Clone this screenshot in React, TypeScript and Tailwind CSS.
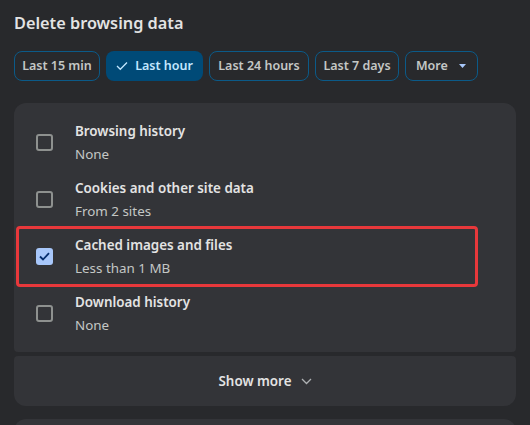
import React from 'react';

const chips = [
  { label: 'Last 15 min', w: 'w-[86px]' },
  { label: 'Last hour', w: 'w-[97px]', selected: true },
  { label: 'Last 24 hours', w: 'w-[100px]' },
  { label: 'Last 7 days', w: 'w-[84px]' },
];

const rows = [
  { title: 'Browsing history', sub: 'None' },
  { title: 'Cookies and other site data', sub: 'From 2 sites' },
  { title: 'Cached images and files', sub: 'Less than 1 MB', checked: true },
  { title: 'Download history', sub: 'None' },
];

const Checkbox = ({ checked }: { checked?: boolean }) =>
  checked ? (
    <div className="w-[17px] h-[17px] rounded-[3px] bg-[#a8c7fa] flex items-center justify-center">
      <svg width="11" height="9" viewBox="0 0 11 9" fill="none">
        <path d="M1 4.5 L4 7.5 L10 1.2" stroke="#062e6f" strokeWidth="1.8" />
      </svg>
    </div>
  ) : (
    <div className="w-[17px] h-[17px] rounded-[3px] border-2 border-[#8e918f]" />
  );

export default function App() {
  return (
    <div
      className="w-[530px] h-[425px] overflow-hidden bg-[#28292c] px-[14px] pt-[11px]"
      style={{ fontFamily: '"Noto Sans", "Segoe UI", sans-serif' }}
    >
      <h1 className="text-[16.3px] font-semibold text-[#e3e3e3] leading-[24px]">Delete browsing data</h1>

      <div className="flex gap-[6px] mt-[16px]">
        {chips.map((c) =>
          c.selected ? (
            <div
              key={c.label}
              className={`${c.w} h-[30px] rounded-[8px] bg-[#004a77] flex items-center justify-center gap-[7px] text-[12.5px] font-semibold text-[#c2e7ff]`}
            >
              <svg width="12" height="10" viewBox="0 0 12 10" fill="none">
                <path d="M1 5 L4.3 8.3 L11 1.5" stroke="#c2e7ff" strokeWidth="1.3" />
              </svg>
              {c.label}
            </div>
          ) : (
            <div
              key={c.label}
              className={`${c.w} h-[30px] rounded-[8px] border border-[#0b5a88] flex items-center justify-center text-[12.5px] font-semibold text-[#c4c7c5]`}
            >
              {c.label}
            </div>
          )
        )}
        <div className="w-[73px] h-[30px] rounded-[8px] border border-[#0b5a88] flex items-center gap-[11px] pl-[10px] text-[12.5px] font-semibold text-[#c4c7c5]">
          More
          <svg width="7" height="4" viewBox="0 0 7 4">
            <path d="M0 0 L7 0 L3.5 4 Z" fill="#a8c7fa" />
          </svg>
        </div>
      </div>

      <div className="mt-[22px] w-[502px] bg-[#333438] rounded-t-[12px] rounded-b-[4px] pt-[11px] pb-[10px]">
        {rows.map((r) => (
          <div key={r.title} className="relative h-[57px] flex items-center">
            <div className="w-[61px] flex justify-start pl-[22px]">
              <Checkbox checked={r.checked} />
            </div>
            <div className="flex flex-col">
              <span className="text-[13.4px] font-semibold text-[#e3e3e3] leading-[20px]">{r.title}</span>
              <span className="text-[13.4px] text-[#c4c7c5] leading-[20px] mt-[3px]">{r.sub}</span>
            </div>
            {r.checked && (
              <div className="absolute left-[2px] top-[-2px] w-[462px] h-[61px] border-[3px] border-[#e8383b] rounded-[4px]" />
            )}
          </div>
        ))}
      </div>

      <div className="mt-[4px] w-[502px] h-[50px] bg-[#333438] rounded-t-[4px] rounded-b-[12px] flex items-center justify-center gap-[9px] text-[13.4px] font-semibold text-[#e3e3e3]">
        Show more
        <svg width="11" height="7" viewBox="0 0 11 7" fill="none">
          <path d="M1 1 L5.5 5.5 L10 1" stroke="#aeb1b3" strokeWidth="1.3" />
        </svg>
      </div>

      <div className="mt-[13px] w-[502px] h-[40px] bg-[#333438] rounded-t-[12px]" />
    </div>
  );
}
